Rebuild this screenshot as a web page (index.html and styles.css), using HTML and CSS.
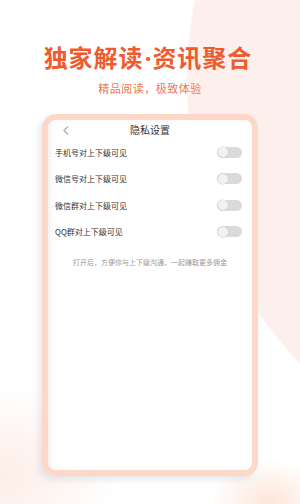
FILE: index.html
```html
<!DOCTYPE html>
<html lang="zh">
<head>
<meta charset="utf-8">
<link rel="stylesheet" href="styles.css">
</head>
<body>
<div class="page">
  <h1 class="headline">独家解读<span class="dot">·</span>资讯聚合</h1>
  <p class="subline">精品阅读，极致体验</p>
  <div class="device">
    <div class="screen">
      <div class="nav">
        <span class="back">
          <svg width="6" height="9" viewBox="0 0 6 9"><path d="M5 0.5 L1 4.5 L5 8.5" fill="none" stroke="#666" stroke-width="1"/></svg>
        </span>
        <span class="title">隐私设置</span>
        <span></span>
      </div>
      <div class="row"><span>手机号对上下级可见</span><span class="switch"><span class="knob"></span></span></div>
      <div class="row"><span>微信号对上下级可见</span><span class="switch"><span class="knob"></span></span></div>
      <div class="row"><span>微信群对上下级可见</span><span class="switch"><span class="knob"></span></span></div>
      <div class="row"><span>QQ群对上下级可见</span><span class="switch"><span class="knob"></span></span></div>
      <p class="note">打开后，方便你与上下级沟通，一起赚取更多佣金</p>
    </div>
  </div>
</div>
</body>
</html>
```

FILE: styles.css
```css
html, body {
  margin: 0;
  padding: 0;
}
body {
  width: 300px;
  height: 504px;
  overflow: hidden;
  font-family: "Noto Sans CJK SC", "Noto Sans", sans-serif;
  background-color: #ffffff;
  background-image:
    radial-gradient(circle at 600px 80px, #fdf0ec 0, #fdf0ec 412px, rgba(253,240,236,0) 414px),
    radial-gradient(ellipse 120px 90px at 0px 475px, #fdede7 0, rgba(253,237,231,0) 100%),
    radial-gradient(ellipse 60px 40px at 270px 500px, #fde6da 0, rgba(253,230,218,0) 100%);
}
.page {
  display: flex;
  flex-direction: column;
  align-items: center;
  height: 504px;
}
.headline {
  margin: 43px 4px 0 0;
  font-size: 24px;
  line-height: 28px;
  font-weight: 700;
  letter-spacing: 1px;
  color: #ef5b2e;
  white-space: nowrap;
}
.dot {
  font-family: "Noto Sans", "DejaVu Sans", sans-serif;
  letter-spacing: 0;
  margin: 0 1px 0 1px;
}
.subline {
  margin: 9px 0 0 0;
  font-size: 11px;
  line-height: 14px;
  letter-spacing: 0.5px;
  color: #f0784e;
}
.device {
  margin-top: 19px;
  width: 204px;
  height: 350px;
  border: 6px solid #fdd8c8;
  border-radius: 14px;
  background: #ffffff;
  box-shadow: -3px 4px 6px rgba(160, 170, 190, 0.25);
}
.screen {
  height: 100%;
  border-radius: 8px;
  background: #ffffff;
  box-shadow: inset 3px 0 4px rgba(200, 205, 215, 0.25);
  display: flex;
  flex-direction: column;
}
.nav {
  display: grid;
  grid-template-columns: 1fr auto 1fr;
  align-items: center;
  height: 18px;
  padding-top: 1px;
}
.back {
  padding-left: 15px;
  display: flex;
  align-items: center;
}
.title {
  font-size: 10px;
  line-height: 12px;
  color: #333;
}
.row {
  display: flex;
  align-items: center;
  justify-content: space-between;
  height: 26.5px;
  padding: 0 10px 0 7px;
  font-size: 8px;
  color: #333;
}
.switch {
  width: 25px;
  height: 11px;
  border-radius: 6px;
  background: #dadada;
  display: flex;
  align-items: center;
  padding-left: 1px;
  box-sizing: border-box;
}
.knob {
  width: 10px;
  height: 10px;
  border-radius: 50%;
  background: #f2f2f2;
  box-shadow: 0 0 0 0.5px #d0d0d0;
}
.note {
  margin: 12px 0 0 0;
  text-align: center;
  font-size: 7px;
  line-height: 10px;
  color: #999;
}
```
